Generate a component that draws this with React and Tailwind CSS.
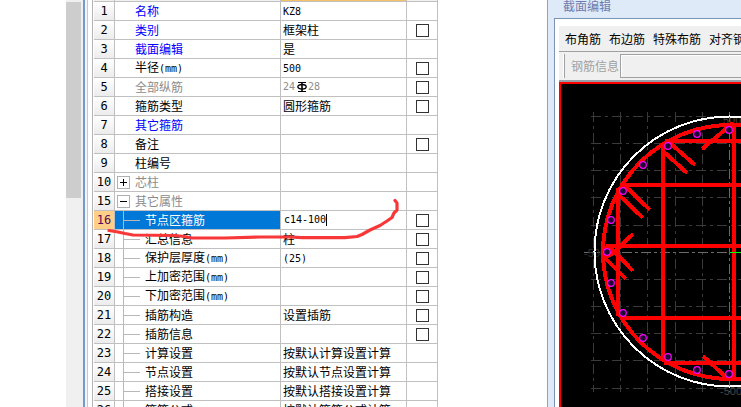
import { useState } from "react";

const ROWS = [
  { no: 1, name: "名称", value: "KZ8", tone: "blue" },
  { no: 2, name: "类别", value: "框架柱", tone: "blue", check: true },
  { no: 3, name: "截面编辑", value: "是", tone: "blue" },
  { no: 4, name: "半径(mm)", value: "500", check: true },
  { no: 5, name: "全部纵筋", rebar: ["24", "28"], tone: "gray", check: true },
  { no: 6, name: "箍筋类型", value: "圆形箍筋", check: true },
  { no: 7, name: "其它箍筋", tone: "blue" },
  { no: 8, name: "备注", check: true },
  { no: 9, name: "柱编号" },
  { no: 10, name: "芯柱", tone: "gray", toggle: "plus" },
  { no: 15, name: "其它属性", tone: "gray", toggle: "minus" },
  { no: 16, name: "节点区箍筋", child: true, selected: true, check: true },
  { no: 17, name: "汇总信息", value: "柱", child: true, check: true },
  { no: 18, name: "保护层厚度(mm)", value: "(25)", child: true, check: true },
  { no: 19, name: "上加密范围(mm)", child: true, check: true },
  { no: 20, name: "下加密范围(mm)", child: true, check: true },
  { no: 21, name: "插筋构造", value: "设置插筋", child: true, check: true },
  { no: 22, name: "插筋信息", child: true, check: true },
  { no: 23, name: "计算设置", value: "按默认计算设置计算", child: true },
  { no: 24, name: "节点设置", value: "按默认节点设置计算", child: true },
  { no: 25, name: "搭接设置", value: "按默认搭接设置计算", child: true },
  { no: 26, name: "箍筋公式", value: "按默认箍筋公式计算", child: true },
];

const TONES = {
  blue: "text-[#0000ff]",
  gray: "text-[#8c8c8c]",
};

const GRID_X = [593.5, 620.5, 647.5, 675.5, 702.5];
const GRID_Y = [116.5, 143.5, 170.5, 197.5, 225.5, 279.5, 306.5, 333.5, 360.5, 388.5];

const BARS = [
  [729, 130], [697, 134], [668, 146], [643, 165], [623, 191], [611, 220], [607, 252],
  [611, 283], [623, 313], [643, 338], [668, 357], [697, 370], [729, 374],
];

// Latin runs are set smaller so that two of them take the width of one Chinese character
function Mixed({ text }) {
  return text.split(/([\x20-\x7e]+)/).map((part, i) =>
    /^[\x20-\x7e]+$/.test(part) ? (
      <span key={i} className="font-['DejaVu_Sans_Mono',monospace] text-[10px]">
        {part}
      </span>
    ) : (
      part
    )
  );
}

function RebarIcon() {
  return (
    <svg className="mr-px ml-[2px] h-[10px] w-[10px]" viewBox="0 0 10 10" fill="none" stroke="#000">
      <path d="M1 .5h8M1 9.5h8" />
      <path d="M5 .5v9" strokeWidth="1.6" />
      <ellipse cx="5" cy="4.8" rx="4.2" ry="2.3" strokeWidth="1.3" />
    </svg>
  );
}

function ToggleButton({ kind, label, open, onClick }) {
  return (
    <button
      type="button"
      aria-label={label}
      aria-expanded={open}
      onClick={onClick}
      className="flex h-[13px] w-[13px] items-center justify-center border border-[#b0b0b0] bg-white"
    >
      <svg className="h-[9px] w-[9px]" viewBox="0 0 9 9" stroke="#000" fill="none">
        <path d={kind === "plus" ? "M1 4.5h7M4.5 1v7" : "M1 4.5h7"} />
      </svg>
    </button>
  );
}

function PropertyRow({ row }) {
  const [text, setText] = useState("c14-100");
  const [open, setOpen] = useState(row.toggle === "minus");
  const tone = row.selected ? "text-white" : TONES[row.tone] || "text-black";

  return (
    <tr className="h-[19px]">
      <th
        scope="row"
        className={`border-r border-b border-[#c0c0c0] p-0 text-center font-['DejaVu_Sans_Mono',monospace] text-[12px] leading-[18px] font-normal ${
          row.selected ? "bg-[#ffcf87] text-[#5a0a5a]" : "bg-linear-to-b from-white to-[#ececec] text-black"
        }`}
      >
        {row.no}
      </th>
      <td className={`border-r border-b border-[#c0c0c0] p-0 ${row.selected ? "bg-[#0078d7]" : "bg-white"}`}>
        <div className={`flex h-[18px] items-center ${tone}`}>
          {row.child ? (
            <span className="flex h-full w-[30px] pl-2">
              <span className="h-full w-px bg-[#b8b8b8]" />
              <span className="h-px w-4 self-center bg-[#b8b8b8]" />
            </span>
          ) : (
            <span className="flex w-5 pl-[2px]">
              {row.toggle && (
                <ToggleButton
                  kind={open ? "minus" : "plus"}
                  label={row.name}
                  open={open}
                  onClick={() => setOpen(!open)}
                />
              )}
            </span>
          )}
          <span className="whitespace-nowrap">
            <Mixed text={row.name} />
          </span>
        </div>
      </td>
      <td className="border-r border-b border-[#c0c0c0] bg-white p-0">
        <div className={`flex h-[18px] items-center pl-[2px] whitespace-nowrap ${row.tone === "gray" ? TONES.gray : "text-black"}`}>
          {row.selected && (
            <>
              <input
                type="text"
                aria-label={row.name}
                value={text}
                onChange={(e) => setText(e.target.value)}
                className="w-[43px] bg-transparent pl-px font-['DejaVu_Sans_Mono',monospace] text-[10px] leading-4 outline-none"
              />
              <span className="h-3 w-px bg-black" />
            </>
          )}
          {row.rebar && (
            <>
              <Mixed text={row.rebar[0]} />
              <RebarIcon />
              <Mixed text={row.rebar[1]} />
            </>
          )}
          {row.value && (
            <span>
              <Mixed text={row.value} />
            </span>
          )}
        </div>
      </td>
      <td className="border-r border-b border-[#c0c0c0] bg-white p-0">
        {row.check && (
          <input
            type="checkbox"
            aria-label={row.name}
            className="mx-auto mt-px block h-[13px] w-[13px] appearance-none border border-[#333333] bg-white checked:bg-[#333333]"
          />
        )}
      </td>
    </tr>
  );
}

function PropertyTable() {
  return (
    <div className="relative">
      <table className="w-[344px] table-fixed border-separate border-spacing-0">
        <colgroup>
          <col className="w-[21px]" />
          <col className="w-[166px]" />
          <col className="w-[126px]" />
          <col className="w-[31px]" />
        </colgroup>
        <thead>
          <tr className="h-[2px]">
            <td className="border-r border-b border-[#c0c0c0] bg-[#f0f0f0] p-0" />
            <td className="border-r border-b border-[#c0c0c0] bg-[#f0f0f0] p-0" />
            <td className="border-r border-b border-[#c0c0c0] bg-[#f5c067] p-0" />
            <td className="border-r border-b border-[#c0c0c0] bg-[#f0f0f0] p-0" />
          </tr>
        </thead>
        <tbody>
          {ROWS.map((row) => (
            <PropertyRow key={row.no} row={row} />
          ))}
        </tbody>
      </table>

      {/* Hand-drawn marker under the edited row */}
      <svg
        className="pointer-events-none absolute top-0 left-0 h-[260px] w-[344px]"
        viewBox="94 0 344 260"
        fill="none"
        stroke="#f83838"
        strokeWidth="3.2"
        strokeLinecap="round"
        strokeLinejoin="round"
      >
        <path d="M109 230.5L118 232 125 233.5 133 235 175 235.5 184 236.5 192 238 225 238 260 237 290 237 302 237.7 345 237.7 357 236.5 362 234.5 370 230 380 225.5 387 221 392 217.5 394 213 397 210 397 203 395 200.5" />
      </svg>
    </div>
  );
}

function SectionDrawing() {
  return (
    <svg
      className="block h-full w-full"
      viewBox="561 84 180 323"
      preserveAspectRatio="xMinYMin slice"
      fill="none"
      aria-label="截面"
    >
      <g stroke="#3a3a3a" strokeDasharray="10 4 3 4">
        {GRID_X.map((x) => (
          <path key={x} d={`M${x} 112V392`} />
        ))}
        {GRID_Y.map((y) => (
          <path key={y} d={`M591 ${y}H741`} />
        ))}
      </g>
      <g stroke="#6a6a6a" strokeDasharray="10 3 3 3">
        <path d="M729.5 112V392M584 252.5H741" />
      </g>
      <g fill="#454545" fontSize="11" fontFamily="Liberation Sans, sans-serif">
        <text x="723" y="124">500</text>
        <text x="720" y="395">-500</text>
        <text x="584" y="257" fill="#303030">-500</text>
      </g>
      <circle cx="729.5" cy="251.5" r="135" stroke="#fff" strokeWidth="2" shapeRendering="crispEdges" />
      <g stroke="#f00" strokeWidth="4" shapeRendering="crispEdges">
        <circle cx="730" cy="252" r="127" />
        <path d="M665 141H741M620 185H741M606 246H741M620 318H741M664 363H741" />
        <path d="M618 188V316M663 146V360M734 126V378" />
        <path d="M669 142l26 23M663 151l24 22M624 185l26 25M618 194l25 24" />
        <path d="M702 149l31-26M703 356l24 22" />
        <path d="M633 234l-21 20-9 4M606 246l-3 5M609 246l24 25M603 256l23 23" />
      </g>
      <g stroke="#f0f" strokeWidth="1.2">
        {BARS.map(([x, y]) => (
          <circle key={`${x}-${y}`} cx={x} cy={y} r="3.3" fill="#1c0a30" />
        ))}
      </g>
      <path d="M730 252.5H741" stroke="#0f0" />
    </svg>
  );
}

function SectionEditor() {
  return (
    <section className="flex min-w-0 flex-1 flex-col border-l border-[#8ea3bd] bg-[#deeaf7] pl-[6px]">
      <h2 className="h-[18px] pl-[9px] text-[12px] leading-3 font-normal text-[#6b7db2]">截面编辑</h2>
      <div className="flex min-h-0 flex-1 flex-col border-t border-l border-[#7a94b4] bg-white pt-[7px] pl-1">
        <div className="flex h-[26px] shrink-0 items-center gap-2 overflow-hidden border-b border-[#a0a0a0] bg-[#f0f0f0] pl-[6px] text-[12px] whitespace-nowrap text-black">
          {["布角筋", "布边筋", "特殊布筋", "对齐钢筋"].map((label) => (
            <button key={label} type="button" className="shrink-0">
              {label}
            </button>
          ))}
        </div>
        <div className="flex h-[30px] shrink-0 border-b-2 border-[#98a0ac] bg-[#f0f0f0] py-[2px] pl-1">
          <span className="w-[2px] border-r border-[#a0a0a0] bg-white" />
          <label htmlFor="rebar-info" className="flex items-center pr-px pl-[6px] text-[12px] whitespace-nowrap text-[#a0a0a0]">
            钢筋信息
          </label>
          <input
            id="rebar-info"
            type="text"
            disabled
            className="min-w-0 flex-1 border border-r-0 border-[#a0a0a0] bg-[#f0f0f0] px-1 text-[12px] inset-shadow-[1px_1px_0_#ffffff]"
          />
        </div>
        <div className="min-h-0 flex-1 border-t-2 border-l-2 border-[#ff0000] bg-black">
          <SectionDrawing />
        </div>
      </div>
    </section>
  );
}

export default function App() {
  return (
    <main className="flex h-screen overflow-hidden bg-white pl-[66px] font-['Noto_Sans_CJK_SC',sans-serif] text-[12px] leading-4">
      {/* Scroll bar of the list on the left */}
      <div className="w-[17px] shrink-0 bg-[#f0f0f0] pt-[2px]">
        <div className="h-[196px] w-[15px] bg-[#cdcdcd]" />
      </div>
      <div className="flex w-[11px] shrink-0">
        <span className="w-[2px] bg-[#7599c8]" />
        <span className="w-[3px] border-r border-[#c8c8c8] bg-[#f2f6fb]" />
        <span className="w-[5px] border-r border-[#b4b4b4] bg-white" />
        <span className="w-px bg-white" />
      </div>
      <div className="mr-[109px] shrink-0">
        <PropertyTable />
      </div>
      <SectionEditor />
    </main>
  );
}
